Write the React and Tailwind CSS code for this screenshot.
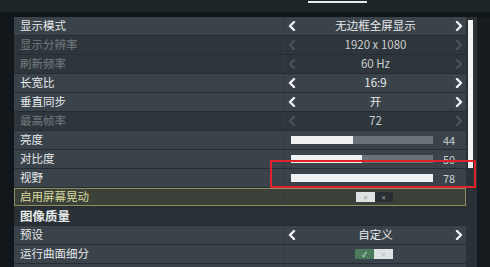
import React from 'react';

const Chevron = ({ dir, dim }) => (
  <svg width="8" height="10" viewBox="0 0 8 10" className={dim ? 'opacity-15' : ''}>
    <polyline
      points={dir === 'left' ? '6,1 2,5 6,9' : '2,1 6,5 2,9'}
      fill="none"
      stroke="#f2f4f5"
      strokeWidth="2.4"
      strokeLinecap="round"
      strokeLinejoin="round"
    />
  </svg>
);

const Row = ({ label, dim, highlight, children }) => (
  <div
    className={`h-[18px] shrink-0 flex items-center ${
      highlight
        ? 'bg-[#3b4139] outline outline-1 -outline-offset-1 outline-[#8c8e62]'
        : dim
        ? 'bg-[#2f363b]'
        : 'bg-[#3b434a]'
    }`}
  >
    <div
      className={`w-[269px] pl-[6px] text-[11.5px] leading-none ${
        highlight ? 'text-[#d9dba0]' : dim ? 'text-[#737b80]' : 'text-[#e6e9ea]'
      }`}
    >
      {label}
    </div>
    <div className="flex-1 h-full flex items-center border-l border-[#333a40]">{children}</div>
  </div>
);

const Selector = ({ value, dim }) => (
  <div className="flex-1 flex items-center pl-[4px] pr-[3px]">
    <Chevron dir="left" dim={dim} />
    <div className={`flex-1 text-center text-[11.5px] ${dim ? 'text-[#c9cdcf]' : 'text-[#e6e9ea]'}`}>{value}</div>
    <Chevron dir="right" dim={dim} />
  </div>
);

const Slider = ({ value, fill }) => (
  <div className="flex-1 flex items-center pl-[7px]">
    <div className="w-[142px] h-[8px] bg-[#6a7378]">
      <div className="h-full bg-[#eef0f1]" style={{ width: `${fill}%` }} />
    </div>
    <div className="ml-[10px] text-[11px] text-[#c9cdcf]">{value}</div>
  </div>
);

const Toggle = ({ on }) => (
  <div className="flex-1 flex items-center justify-center pr-[2px]">
    <div className="flex h-[10px]">
      {on ? (
        <>
          <div className="w-[19px] bg-[#4c7a5c] flex items-center justify-center text-[7px] text-[#dfe]">✓</div>
          <div className="w-[19px] bg-[#dfe2e3] flex items-center justify-center text-[6px] text-[#bbb]">✕</div>
        </>
      ) : (
        <>
          <div className="w-[19px] bg-[#dfe2e3] flex items-center justify-center text-[6px] text-[#999]">✕</div>
          <div className="w-[18px] bg-[#2a2f33] flex items-center justify-center text-[6px] text-[#aaa]">✕</div>
        </>
      )}
    </div>
  </div>
);

export default function App() {
  return (
    <div
      className="w-[490px] h-[267px] overflow-hidden bg-[#1a2025] flex flex-col"
      style={{ fontFamily: '"Noto Sans CJK SC", "Noto Sans", sans-serif' }}
    >
      <div className="h-[12px] shrink-0 bg-[#1e2529] flex">
        <div className="ml-[308px] mt-[1px] w-[59px] h-[2px] bg-[#e8ecee]" />
      </div>
      <div className="h-[5px] shrink-0 bg-[#10151a]" />
      <div className="flex flex-1 min-h-0">
        <div className="w-[14px] shrink-0 bg-[#11171b]" />
        <div className="w-[452px] flex flex-col gap-px bg-[#262c31]">
          <Row label="显示模式"><Selector value="无边框全屏显示" /></Row>
          <Row label="显示分辨率" dim><Selector value="1920 x 1080" dim /></Row>
          <Row label="刷新频率" dim><Selector value="60 Hz" dim /></Row>
          <Row label="长宽比"><Selector value="16:9" /></Row>
          <Row label="垂直同步"><Selector value="开" /></Row>
          <Row label="最高帧率" dim><Selector value="72" dim /></Row>
          <Row label="亮度"><Slider value="44" fill={44} /></Row>
          <Row label="对比度"><Slider value="50" fill={50} /></Row>
          <div className="relative shrink-0">
            <Row label="视野"><Slider value="78" fill={100} /></Row>
            <div className="absolute left-[256px] top-[-9px] w-[206px] h-[28px] border-2 border-[#e0232b] pointer-events-none" />
          </div>
          <Row label="启用屏幕晃动" highlight><Toggle /></Row>
          <div className="h-[18px] shrink-0 flex items-center bg-[#2a3136] pl-[6px] text-[12.5px] font-bold text-[#e6e9ea]">图像质量</div>
          <Row label="预设"><Selector value="自定义" /></Row>
          <Row label="运行曲面细分"><Toggle on /></Row>
          <Row label="环境光遮蔽"><Toggle on /></Row>
        </div>
        <div className="w-[11px] shrink-0 bg-[#2b3237] pt-[3px] pl-[2px]">
          <div className="w-[5px] h-[148px] bg-[#f2f4f5]" />
        </div>
        <div className="flex-1 bg-[#161b1f]" />
      </div>
    </div>
  );
}
